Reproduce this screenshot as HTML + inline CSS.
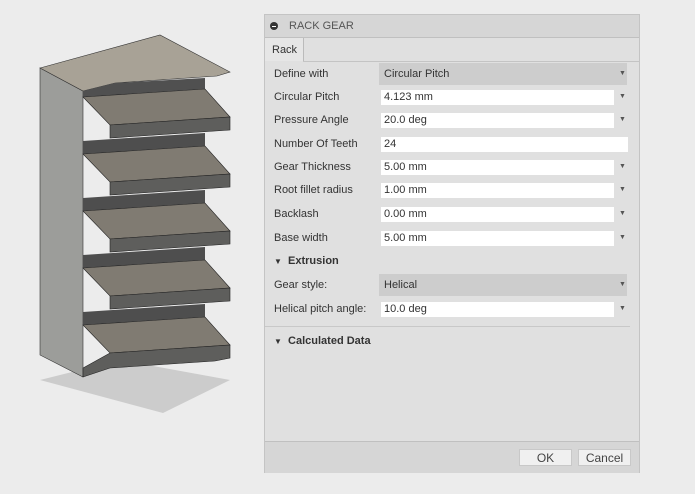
<!DOCTYPE html><html><head><style>
body{margin:0;width:695px;height:494px;background:#ececec;font-family:"Liberation Sans",sans-serif;font-size:11px;color:#333;position:relative;overflow:hidden}
.a{position:absolute}
.p{left:264px;top:14px;width:376px;height:459px;background:#e0e0e0;border:1px solid #c4c4c4;box-sizing:border-box}
.l{left:274px;line-height:14px}
.in{background:#fff;left:381px;width:233px;height:15px;line-height:15px;padding-left:3px;box-sizing:border-box}
.ar{left:619px;font-size:7px;color:#555}
.dd{left:379px;width:248px;height:22px;background:#cdcdcd;line-height:22px;padding-left:5px;box-sizing:border-box}
.b{font-weight:bold}
.btn{top:449px;height:17px;background:#f0f0f0;border:1px solid #c8c8c8;text-align:center;line-height:17px;font-size:12px;color:#444;box-sizing:border-box}
</style></head><body>
<svg class="a" style="left:0;top:0" width="260" height="494">
<polygon points="40,380 163,413 230,380 120,360" fill="#c4c4c4" opacity="0.8"/>
<polygon points="40,68 83,91 83,377 40,355" fill="#9c9d9a" stroke="#333" stroke-width="0.6"/>
<polygon points="40,68 160,35 230,72 217,76 115,83 83,91" fill="#a8a296" stroke="#333" stroke-width="0.6"/>
<polygon points="83,91 115,83 205,78 205,89 83,97" fill="#505050"/>
<g id="t"><polygon points="83,97 205,89 230,117 110,125" fill="#807b72" stroke="#222" stroke-width="0.6"/>
<polygon points="110,125 230,117 230,130 110,138" fill="#5e5e5c" stroke="#222" stroke-width="0.6"/>
<polygon points="83,141 205,133 205,146 83,154" fill="#4e4e4e"/></g>
<use href="#t" transform="translate(0,57)"/><use href="#t" transform="translate(0,114)"/><use href="#t" transform="translate(0,171)"/>
<polygon points="83,325 205,317 230,345 110,353" fill="#807b72" stroke="#222" stroke-width="0.6"/>
<polygon points="110,353 230,345 230,358 215,361 110,368 83,377 83,368" fill="#5e5e5c" stroke="#222" stroke-width="0.6"/>
</svg>
<div class="a p"></div>
<div class="a" style="left:265px;top:15px;width:374px;height:22px;background:#d6d6d6;border-bottom:1px solid #c0c0c0"></div>
<div class="a" style="left:270px;top:22px;width:8px;height:8px;border-radius:50%;background:#333"></div>
<div class="a" style="left:272px;top:25.5px;width:4px;height:1px;background:#fff"></div>
<div class="a" style="left:289px;top:19px;color:#555;line-height:14px">RACK GEAR</div>
<div class="a" style="left:265px;top:38px;width:38px;height:23px;background:#e6e6e6;border-right:1px solid #bbb"></div>
<div class="a" style="left:303px;top:61px;width:336px;height:1px;background:#c4c4c4"></div>
<div class="a" style="left:272px;top:43px;line-height:14px">Rack</div>
<div class="a dd" style="top:63px">Circular Pitch</div><div class="a ar" style="top:70px">▼</div>
<div class="a l" style="top:67px">Define with</div>
<div class="a l" style="top:90px">Circular Pitch</div><div class="a in" style="top:90px">4.123 mm</div><div class="a ar" style="top:93px">▼</div>
<div class="a l" style="top:113px">Pressure Angle</div><div class="a in" style="top:113px">20.0 deg</div><div class="a ar" style="top:116px">▼</div>
<div class="a l" style="top:137px">Number Of Teeth</div><div class="a in" style="top:137px;width:247px">24</div>
<div class="a l" style="top:160px">Gear Thickness</div><div class="a in" style="top:160px">5.00 mm</div><div class="a ar" style="top:163px">▼</div>
<div class="a l" style="top:183px">Root fillet radius</div><div class="a in" style="top:183px">1.00 mm</div><div class="a ar" style="top:186px">▼</div>
<div class="a l" style="top:207px">Backlash</div><div class="a in" style="top:207px">0.00 mm</div><div class="a ar" style="top:210px">▼</div>
<div class="a l" style="top:231px">Base width</div><div class="a in" style="top:231px">5.00 mm</div><div class="a ar" style="top:234px">▼</div>
<div class="a l b" style="top:254px"><span style="font-size:8px">▼</span>&nbsp; Extrusion</div>
<div class="a dd" style="top:274px">Helical</div><div class="a ar" style="top:281px">▼</div>
<div class="a l" style="top:278px">Gear style:</div>
<div class="a l" style="top:302px">Helical pitch angle:</div><div class="a in" style="top:302px">10.0 deg</div><div class="a ar" style="top:305px">▼</div>
<div class="a" style="left:265px;top:326px;width:365px;height:1px;background:#c8c8c8"></div>
<div class="a l b" style="top:334px"><span style="font-size:8px">▼</span>&nbsp; Calculated Data</div>
<div class="a" style="left:265px;top:441px;width:374px;height:31px;background:#d6d6d6;border-top:1px solid #c0c0c0"></div>
<div class="a btn" style="left:519px;width:53px">OK</div>
<div class="a btn" style="left:578px;width:53px">Cancel</div>
</body></html>
